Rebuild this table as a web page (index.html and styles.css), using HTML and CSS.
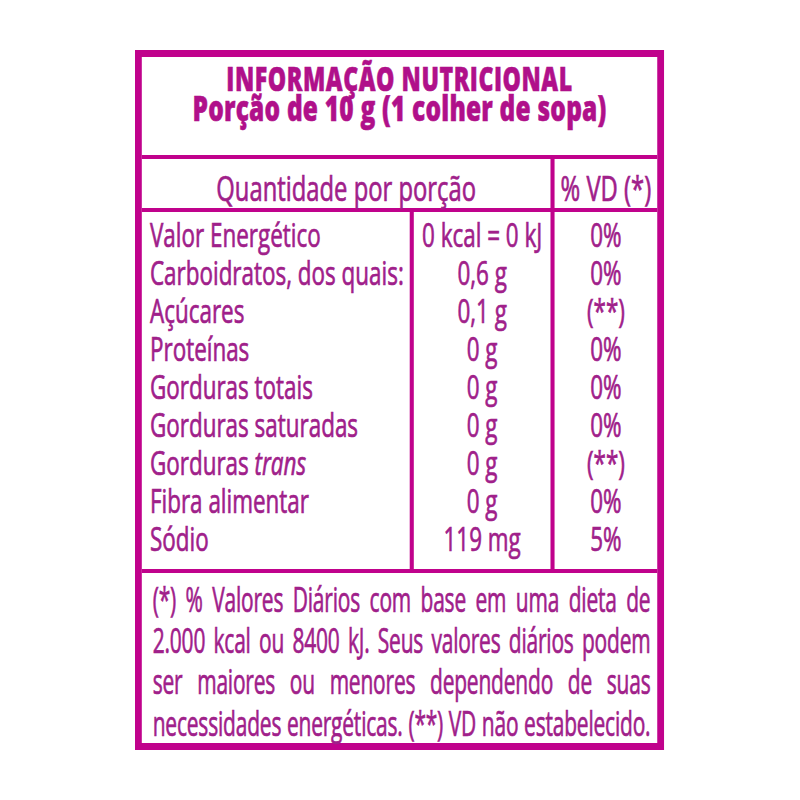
FILE: index.html
```html
<!DOCTYPE html>
<html lang="pt-BR">
<head>
<meta charset="utf-8">
<title>Informação Nutricional</title>
<link rel="stylesheet" href="styles.css">
</head>
<body>
<div class="label">
  <div class="head">
    <div class="title">INFORMAÇÃO NUTRICIONAL</div>
    <div class="sub">Porção de 10 g (1 colher de sopa)</div>
  </div>
  <div class="qrow">
    <div class="q">Quantidade por porção</div>
    <div class="vd">% VD (*)</div>
  </div>
  <div class="body">
    <div class="col c1">
      <div class="cell">Valor Energético</div>
      <div class="cell">Carboidratos, dos quais:</div>
      <div class="cell">Açúcares</div>
      <div class="cell">Proteínas</div>
      <div class="cell">Gorduras totais</div>
      <div class="cell">Gorduras saturadas</div>
      <div class="cell">Gorduras <i>trans</i></div>
      <div class="cell">Fibra alimentar</div>
      <div class="cell">Sódio</div>
    </div>
    <div class="col c2">
      <div class="cell">0 kcal = 0 kJ</div>
      <div class="cell">0,6 g</div>
      <div class="cell">0,1 g</div>
      <div class="cell">0 g</div>
      <div class="cell">0 g</div>
      <div class="cell">0 g</div>
      <div class="cell">0 g</div>
      <div class="cell">0 g</div>
      <div class="cell">119 mg</div>
    </div>
    <div class="col c3">
      <div class="cell">0%</div>
      <div class="cell">0%</div>
      <div class="cell">(**)</div>
      <div class="cell">0%</div>
      <div class="cell">0%</div>
      <div class="cell">0%</div>
      <div class="cell">(**)</div>
      <div class="cell">0%</div>
      <div class="cell">5%</div>
    </div>
  </div>
  <div class="foot">
    <div class="foot-in">
      <div class="ln">(*) % Valores Diários com base em uma dieta de</div>
      <div class="ln">2.000 kcal ou 8400 kJ. Seus valores diários podem</div>
      <div class="ln">ser maiores ou menores dependendo de suas</div>
      <div class="ln">necessidades energéticas. (**) VD não estabelecido.</div>
    </div>
  </div>
</div>
</body>
</html>
```
FILE: styles.css
```css
* { box-sizing: border-box; }
html, body { margin: 0; padding: 0; background: #ffffff; overflow: hidden; }
body { width: 800px; height: 800px; }

.label {
  width: 778px;
  height: 700px;
  margin: 50px 0 0 135px;
  border: 7px solid #c0028c;
  border-left-width: 10px;
  border-right-width: 10px;
  transform: scaleX(0.68);
  transform-origin: 0 0;
  font-family: "Open Sans", "Liberation Sans", sans-serif;
  color: #a0208a;
  -webkit-text-stroke: 0.7px #a0208a;
  display: flex;
  flex-direction: column;
}
.label > div { flex-shrink: 0; }

.head {
  height: 102px;
  border-bottom: 4px solid #c0028c;
  padding-top: 6px;
  text-align: center;
  font-weight: 800;
  color: #b0108a;
  -webkit-text-stroke: 0.6px #b0108a;
  white-space: nowrap;
}
.title { font-size: 34px; line-height: 30px; letter-spacing: 0.8px; }
.sub { font-size: 36px; line-height: 30px; letter-spacing: 0.3px; }

.qrow {
  height: 53px;
  border-bottom: 4px solid #c0028c;
  display: flex;
  font-size: 35px;
  line-height: 40px;
  white-space: nowrap;
}
.q {
  width: 607px;
  border-right: 6px solid #c0028c;
  text-align: center;
  padding-top: 9px;
}
.vd {
  flex: 1;
  text-align: center;
  padding-top: 9px;
}

.body {
  height: 361px;
  border-bottom: 4px solid #c0028c;
  display: flex;
}
.col { padding-top: 4.25px; }
.c1 { width: 400px; border-right: 6px solid #c0028c; padding-left: 12px; }
.c2 { width: 207px; border-right: 6px solid #c0028c; text-align: center; }
.c3 { flex: 1; text-align: center; }
.cell { font-size: 33px; line-height: 37.9px; white-space: nowrap; }

.foot {
  flex: 1;
  padding: 4.8px 10px 0 16px;
}
.foot-in {
  width: calc(100% / 0.88);
  transform: scaleX(0.88);
  transform-origin: 0 0;
  font-size: 35px;
  line-height: 41.3px;
  letter-spacing: -0.3px;
}
.ln { text-align: justify; text-align-last: justify; }
```
